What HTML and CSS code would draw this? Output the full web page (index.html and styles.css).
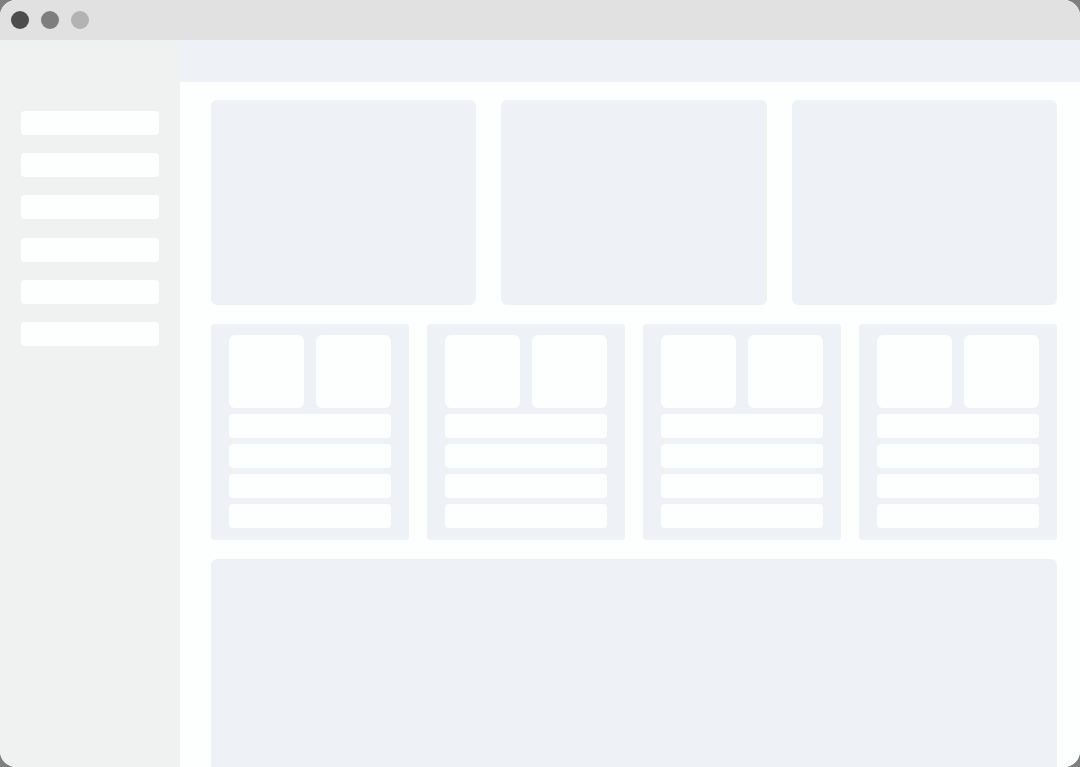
FILE: index.html
```html
<!DOCTYPE html>
<html>
<head>
<meta charset="utf-8">
<link rel="stylesheet" href="styles.css">
</head>
<body>
<div class="window">
  <div class="titlebar">
    <span class="dot dot-1"></span>
    <span class="dot dot-2"></span>
    <span class="dot dot-3"></span>
  </div>
  <div class="body">
    <aside class="sidebar">
      <div class="nav-item"></div>
      <div class="nav-item"></div>
      <div class="nav-item"></div>
      <div class="nav-item"></div>
      <div class="nav-item"></div>
      <div class="nav-item"></div>
    </aside>
    <main class="main">
      <div class="header"></div>
      <div class="content">
        <div class="row-top">
          <div class="big-card"></div>
          <div class="big-card"></div>
          <div class="big-card"></div>
        </div>
        <div class="row-mid">
          <div class="mid-card">
            <div class="tiles"><div class="tile"></div><div class="tile"></div></div>
            <div class="line"></div><div class="line"></div><div class="line"></div><div class="line"></div>
          </div>
          <div class="mid-card">
            <div class="tiles"><div class="tile"></div><div class="tile"></div></div>
            <div class="line"></div><div class="line"></div><div class="line"></div><div class="line"></div>
          </div>
          <div class="mid-card">
            <div class="tiles"><div class="tile"></div><div class="tile"></div></div>
            <div class="line"></div><div class="line"></div><div class="line"></div><div class="line"></div>
          </div>
          <div class="mid-card">
            <div class="tiles"><div class="tile"></div><div class="tile"></div></div>
            <div class="line"></div><div class="line"></div><div class="line"></div><div class="line"></div>
          </div>
        </div>
        <div class="bottom-panel"></div>
      </div>
    </main>
  </div>
</div>
</body>
</html>
```
FILE: styles.css
```css
html, body {
  margin: 0;
  padding: 0;
  background: #7f7f7f;
  width: 1080px;
  height: 767px;
  overflow: hidden;
}
.window {
  width: 1080px;
  height: 767px;
  border-radius: 16px;
  overflow: hidden;
  background: #ffffff;
  display: flex;
  flex-direction: column;
}
.titlebar {
  height: 40px;
  flex: none;
  background: #e1e1e1;
  display: flex;
  align-items: center;
  gap: 12px;
  padding-left: 11px;
  padding-bottom: 1px;
  box-sizing: border-box;
}
.dot {
  width: 18px;
  height: 18px;
  border-radius: 50%;
}
.dot-1 { background: #4d4d4d; }
.dot-2 { background: #7e7e7e; }
.dot-3 { background: #b3b3b3; }
.body {
  flex: 1;
  display: flex;
  min-height: 0;
}
.sidebar {
  width: 180px;
  flex: none;
  background: #f0f1f1;
  box-sizing: border-box;
  padding: 71px 21px 0 21px;
  display: flex;
  flex-direction: column;
  gap: 18.2px;
}
.nav-item {
  height: 24px;
  background: #fdfefe;
  border-radius: 4px;
}
.main {
  flex: 1;
  display: flex;
  flex-direction: column;
  min-width: 0;
}
.header {
  height: 42px;
  flex: none;
  background: #eef2f7;
}
.content {
  flex: 1;
  background: #fdfefe;
  padding: 18px 23px 0 31px;
  display: flex;
  flex-direction: column;
  gap: 19px;
}
.row-top {
  display: flex;
  gap: 25px;
  height: 205px;
  flex: none;
}
.big-card {
  flex: 1;
  background: #eef2f7;
  border-radius: 6px;
}
.row-mid {
  display: flex;
  gap: 18px;
  flex: none;
}
.mid-card {
  flex: 1;
  background: #eef2f7;
  border-radius: 3px;
  padding: 11px 18px 12px 18px;
  display: flex;
  flex-direction: column;
  gap: 6px;
}
.tiles {
  display: flex;
  gap: 12px;
  height: 73px;
}
.tile {
  flex: 1;
  background: #fdfefe;
  border-radius: 6px;
}
.line {
  height: 24px;
  background: #fdfefe;
  border-radius: 4px;
}
.bottom-panel {
  flex: 1;
  background: #eef2f7;
  border-radius: 6px 6px 0 0;
}
```
